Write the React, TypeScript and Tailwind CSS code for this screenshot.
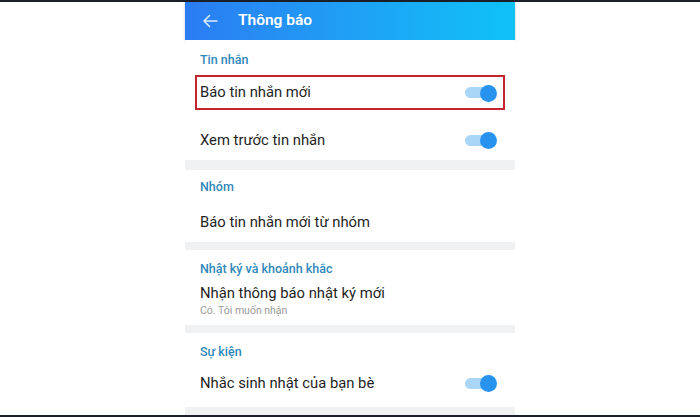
import React from "react";

function Toggle() {
  return (
    <div className="relative w-[32px] h-[18px] flex items-center">
      <div className="w-[30px] h-[11px] rounded-full bg-[#a9d5f7]" />
      <div className="absolute right-0 top-[1px] w-[17px] h-[17px] rounded-full bg-[#2793ef]" />
    </div>
  );
}

function Label({ children }: { children: React.ReactNode }) {
  return (
    <div className="text-[12.5px] leading-[14px] font-medium text-[#3088bb]">{children}</div>
  );
}

export default function App() {
  return (
    <div
      className="w-[700px] h-[417px] bg-white flex flex-col overflow-hidden"
      style={{ fontFamily: "Roboto, 'Noto Sans', 'Liberation Sans', sans-serif" }}
    >
      <div className="h-[2px] bg-[#1b1f2a] shrink-0" />
      <div className="w-[330px] ml-[185px] flex-1 flex flex-col bg-[#f0f1f3]">
        {/* header */}
        <div className="h-[38px] shrink-0 flex items-center bg-gradient-to-r from-[#2b7cf2] to-[#0ec2f6] shadow-[0_1px_3px_rgba(0,0,0,0.2)]">
          <svg className="ml-[17px]" width="16" height="14" viewBox="0 0 16 14" fill="none">
            <path d="M15 7H2M7.5 1.5L2 7l5.5 5.5" stroke="#d8ecff" strokeWidth="1.6" strokeLinecap="round" strokeLinejoin="round" />
          </svg>
          <div className="ml-[20px] text-white text-[15.5px] font-semibold leading-none">Thông báo</div>
        </div>

        {/* section 1 */}
        <div className="bg-white h-[120px] shrink-0 flex flex-col">
          <div className="h-[35px] pt-[13px] pl-[15px]">
            <Label>Tin nhắn</Label>
          </div>
          <div className="mx-[10px] h-[35px] border-2 border-[#c42430] flex items-center justify-between pl-[3px] pr-[6px]">
            <span className="text-[14.8px] text-[#1f1f1f]">Báo tin nhắn mới</span>
            <Toggle />
          </div>
          <div className="h-[50px] pt-[10px] flex items-center justify-between pl-[15px] pr-[18px]">
            <span className="text-[14.8px] text-[#1f1f1f]">Xem trước tin nhắn</span>
            <Toggle />
          </div>
        </div>

        <div className="h-[10px] shrink-0" />

        {/* section 2 */}
        <div className="bg-white h-[72px] shrink-0 flex flex-col pl-[15px]">
          <div className="pt-[10px]">
            <Label>Nhóm</Label>
          </div>
          <div className="mt-[19px] text-[14.8px] leading-[18px] text-[#1f1f1f]">Báo tin nhắn mới từ nhóm</div>
        </div>

        <div className="h-[8px] shrink-0" />

        {/* section 3 */}
        <div className="bg-white h-[75px] shrink-0 flex flex-col pl-[15px]">
          <div className="pt-[12px]">
            <Label>Nhật ký và khoảnh khắc</Label>
          </div>
          <div className="mt-[8px] text-[14.8px] leading-[18px] text-[#1f1f1f]">Nhận thông báo nhật ký mới</div>
          <div className="mt-[2px] text-[10.5px] leading-[13px] text-[#9a9a9a]">Có. Tôi muốn nhận</div>
        </div>

        <div className="h-[8px] shrink-0" />

        {/* section 4 */}
        <div className="bg-white h-[74px] shrink-0 flex flex-col">
          <div className="pt-[12px] pl-[15px]">
            <Label>Sự kiện</Label>
          </div>
          <div className="mt-[15px] h-[18px] flex items-center justify-between pl-[15px] pr-[18px]">
            <span className="text-[14.8px] text-[#1f1f1f]">Nhắc sinh nhật của bạn bè</span>
            <Toggle />
          </div>
        </div>
        <div className="flex-1" />
      </div>
      <div className="h-[2px] bg-[#1b1f2a] shrink-0" />
    </div>
  );
}
